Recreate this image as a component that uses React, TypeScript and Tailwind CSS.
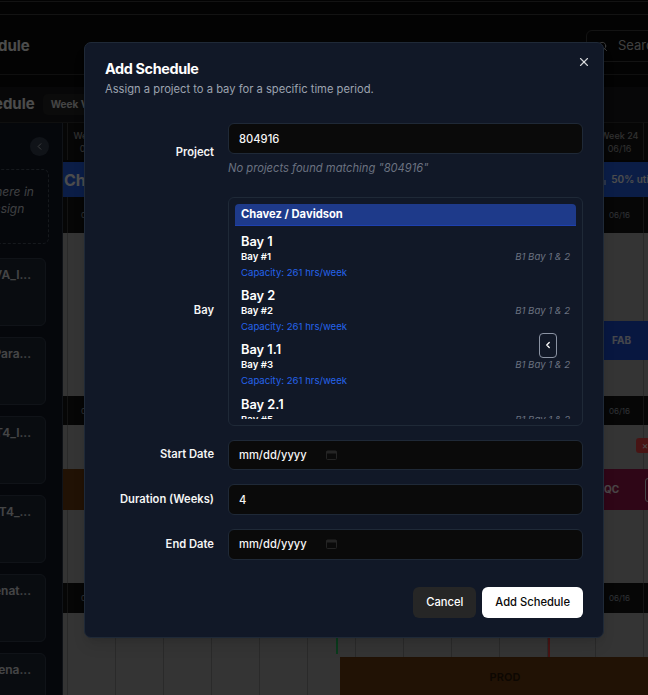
import { X, Search, ChevronLeft } from 'lucide-react';

const weeks = [
  ['Week 13', '03/31'],
  ['Week 14', '04/07'],
  ['Week 15', '04/14'],
  ['Week 16', '04/21'],
  ['Week 17', '04/28'],
  ['Week 18', '05/05'],
  ['Week 19', '05/12'],
  ['Week 20', '05/19'],
  ['Week 21', '05/26'],
  ['Week 22', '06/02'],
  ['Week 23', '06/09'],
  ['Week 24', '06/16'],
  ['Week 25', '06/23'],
];

const projects = ['VA_I...', 'Para...', 'T4_I...', 'UT4_...', 'enat...', 'Sena...'];

const bays = [
  { name: 'Bay 1', num: 'Bay #1' },
  { name: 'Bay 2', num: 'Bay #2' },
  { name: 'Bay 1.1', num: 'Bay #3' },
  { name: 'Bay 2.1', num: 'Bay #5' },
  { name: 'Bay 3', num: 'Bay #6' },
];

function WeekHeader() {
  return (
    <div className="flex h-[37px] bg-[#171717] pl-[4px]">
      {weeks.map(([w, d]) => (
        <div key={w} className="flex w-[48px] shrink-0 flex-col items-center justify-center border-l border-[#404040] text-[9px] leading-[13px] text-[#a3a3a3]">
          <span className="font-medium">{w}</span>
          <span>{d}</span>
        </div>
      ))}
    </div>
  );
}

function DateRow({ h }: { h: string }) {
  return (
    <div className={`flex ${h} bg-[#171717] pl-[4px]`}>
      {weeks.map(([w, d]) => (
        <div key={w} className="flex w-[48px] shrink-0 items-center justify-center border-l border-[#404040] text-[8px] text-[#9ca3af]">
          {d}
        </div>
      ))}
    </div>
  );
}

function GridArea({ h }: { h: string }) {
  return (
    <div className={`flex ${h} bg-[#adadad] pl-[4px]`}>
      {weeks.map(([w]) => (
        <div key={w} className="w-[48px] shrink-0 border-l border-[#8c8c8c]" />
      ))}
    </div>
  );
}

function Field({ label, children }: { label: string; children: React.ReactNode }) {
  return (
    <div className="grid grid-cols-4 items-center gap-x-[14px]">
      <label className="text-right text-[11.2px] font-semibold leading-none text-[#f5f5f5]">{label}</label>
      <div className="col-span-3">{children}</div>
    </div>
  );
}

const inputCls =
  'flex h-[30.7px] w-full rounded-[6px] border border-[#1f2937] bg-[#0a0a0a] px-[10px] text-[11.2px] font-medium text-[#f5f5f5] outline-none';

function CalendarIcon() {
  return (
    <svg width="11" height="10" viewBox="0 0 11 10" fill="none" className="ml-[19px] shrink-0">
      <rect x="0.5" y="1" width="10" height="8.5" rx="1" stroke="#242424" />
      <rect x="0.5" y="1" width="10" height="2.5" fill="#242424" />
    </svg>
  );
}

function DateInput() {
  return (
    <div className={`${inputCls} items-center`}>
      <span>mm/dd/yyyy</span>
      <CalendarIcon />
    </div>
  );
}

export default function App() {
  return (
    <div className="relative h-[695px] w-[648px] overflow-hidden bg-[#0a0a0a] font-['Inter',sans-serif]">
      {/* page behind the dialog */}
      <div className="mt-px h-[14px] border-y border-[#404040]" />
      <div className="flex h-[60px] items-center border-b border-[#333333] pt-[3px]">
        <h1 className="-ml-[39px] text-[15px] font-bold text-white">Schedule</h1>
        <div className="-mr-[150px] ml-auto flex h-[32px] w-[212px] shrink-0 items-center gap-[10px] rounded-[6px] border border-[#404040] px-[10px] text-[13px] text-[#d4d4d4]">
          <Search size={11} />
          <span>Search projects...</span>
        </div>
      </div>
      <div className="h-[12px]" />
      <div className="flex h-[36px] items-center gap-[8px] border-b border-[#333333] bg-[#18181b]">
        <h2 className="-ml-[65px] text-[15px] font-bold text-white">Bay Schedule</h2>
        <span className="rounded-[5px] bg-[#262626] px-[8px] py-[3px] text-[10px] font-bold text-[#e5e5e5]">Week View</span>
      </div>
      <div className="flex h-[572px]">
        <aside className="w-[63px] shrink-0 border-r border-[#374151] bg-[#111827]">
          <div className="ml-[30px] mt-[14px] flex h-[19px] w-[19px] items-center justify-center rounded-full bg-[#374151] text-[#d1d5db]">
            <ChevronLeft size={11} />
          </div>
          <div className="-ml-[100px] mt-[13px] flex h-[75px] w-[149px] flex-col items-center rounded-[6px] border border-dashed border-[#4b5563] pt-[13px] text-[12px] italic leading-[17px] text-[#d1d5db]">
            <span>Drag projects here in</span>
            <span>order to unassign</span>
          </div>
          <div className="mt-[14px] flex flex-col gap-[11px]">
            {projects.map((p) => (
              <div key={p} className="-ml-[100px] h-[68px] w-[146px] rounded-[6px] border border-[#374151] bg-[#1f2937] pr-[14px] pt-[7px] text-right text-[12px] font-semibold text-[#e5e7eb]">
                {p}
              </div>
            ))}
          </div>
        </aside>
        <div className="relative flex-1 overflow-hidden">
          <WeekHeader />
          <div className="h-[2px]" />
          <div className="flex h-[35px] items-center bg-[#2563eb] pl-[1px] text-white">
            <span className="text-[16px] font-bold">Chavez / Davidson</span>
            <span className="-mr-[36px] ml-auto flex items-center gap-[4px] text-[10px] font-semibold">
              <svg width="6" height="10" viewBox="0 0 6 10" fill="none" stroke="currentColor" strokeWidth="1">
                <path d="M1 2v8M4 5v5" />
              </svg>
              50% utilization
            </span>
          </div>
          <DateRow h="h-[36px]" />
          <GridArea h="h-[163px]" />
          <DateRow h="h-[29px]" />
          <GridArea h="h-[158px]" />
          <DateRow h="h-[30px]" />
          <GridArea h="h-[82px]" />

          <div className="absolute left-[485px] top-[110px] h-[470px] w-[1.5px] bg-[#ef4444]" />
          <div className="absolute left-[540px] top-[198px] flex h-[39px] w-[70px] items-center bg-[#1d4ed8] pl-[9px] text-[10px] font-bold text-white/90">
            FAB
          </div>
          <div className="absolute left-0 top-[346px] h-[41px] w-[300px] bg-[#713f12]" />
          <div className="absolute left-[540px] top-[346px] flex h-[41px] w-[70px] items-center bg-[#9d174d] pl-[1px] text-[10px] font-bold text-white/90">
            QC
          </div>
          <div className="absolute left-[582px] top-[355px] h-[24px] w-[12px] rounded-[3px] border border-[#e5e7eb]" />
          <div className="absolute left-[573px] top-[315px] flex h-[15px] w-[18px] items-center justify-center rounded-[3px] bg-[#ef4444] text-[10px] text-white">
            ×
          </div>
          <div className="absolute left-[273px] top-[514px] h-[17px] w-[2px] bg-[#22c55e]" />
          <div className="absolute left-[277px] top-[534px] flex h-[60px] w-[330px] justify-center bg-[#713f12] pt-[12px] text-[11px] font-bold text-black/60">
            PROD
          </div>
        </div>
      </div>

      {/* overlay + dialog */}
      <div className="absolute inset-0 bg-black/70" />
      <div className="absolute left-[84px] top-[42px] w-[520px] rounded-[7px] border border-[#1f2937] bg-[#111827] px-[20px] pb-[19px] pt-[19px] shadow-lg">
        <button className="absolute right-[12px] top-[12px] text-white/80">
          <X size={14} strokeWidth={2} />
        </button>
        <h2 className="text-[14.4px] font-bold leading-none tracking-tight text-white">Add Schedule</h2>
        <p className="mt-[5px] text-[11.2px] leading-[16px] text-[#9ca3af]">
          Assign a project to a bay for a specific time period.
        </p>

        <div className="mt-[26px] flex flex-col gap-[14px]">
          <Field label="Project">
            <div className="pb-[7px]">
              <input className={inputCls} value="804916" readOnly />
              <p className="mt-[5.5px] text-[11.2px] italic leading-[16px] text-[#6b7280]">
                No projects found matching "804916"
              </p>
            </div>
          </Field>
          <Field label="Bay">
            <div className="relative h-[229px] rounded-[6px] border border-[#1f2937] bg-[#111827] p-[6px]">
              <div className="h-full overflow-hidden">
                <div className="flex h-[22.5px] items-center rounded-t-[4px] border-b border-[#1e40af] bg-[#1e3a8a] px-[6px] text-[11.2px] font-bold text-white">
                  Chavez / Davidson
                </div>
                {bays.map((b) => (
                  <div key={b.num} className="px-[6px] pb-[1.2px] pt-[6px]">
                    <div className="text-[12.8px] font-semibold leading-[19px] text-white">{b.name}</div>
                    <div className="flex items-center justify-between text-[9.6px] leading-[12px]">
                      <span className="font-semibold text-white">{b.num}</span>
                      <span className="italic text-[#6b7280]">B1 Bay 1 &amp; 2</span>
                    </div>
                    <div className="mt-[4px] text-[9.6px] leading-[12px] text-[#2563eb]">Capacity: 261 hrs/week</div>
                  </div>
                ))}
              </div>
              <div className="absolute left-[310px] top-[135px] flex h-[25px] w-[18px] items-center justify-center rounded-[4px] border border-[#8b93a3] bg-[#111827] text-white">
                <ChevronLeft size={10} strokeWidth={3} />
              </div>
            </div>
          </Field>
          <Field label="Start Date">
            <DateInput />
          </Field>
          <Field label="Duration (Weeks)">
            <input className={inputCls} value="4" readOnly />
          </Field>
          <Field label="End Date">
            <DateInput />
          </Field>
        </div>

        <div className="mt-[27px] flex justify-end gap-[6px]">
          <button className="h-[31px] rounded-[6px] bg-[#262626] px-[13px] text-[11.2px] font-medium text-white">Cancel</button>
          <button className="h-[31px] rounded-[6px] bg-white px-[13px] text-[11.2px] font-medium text-[#0a0a0a]">Add Schedule</button>
        </div>
      </div>
    </div>
  );
}
